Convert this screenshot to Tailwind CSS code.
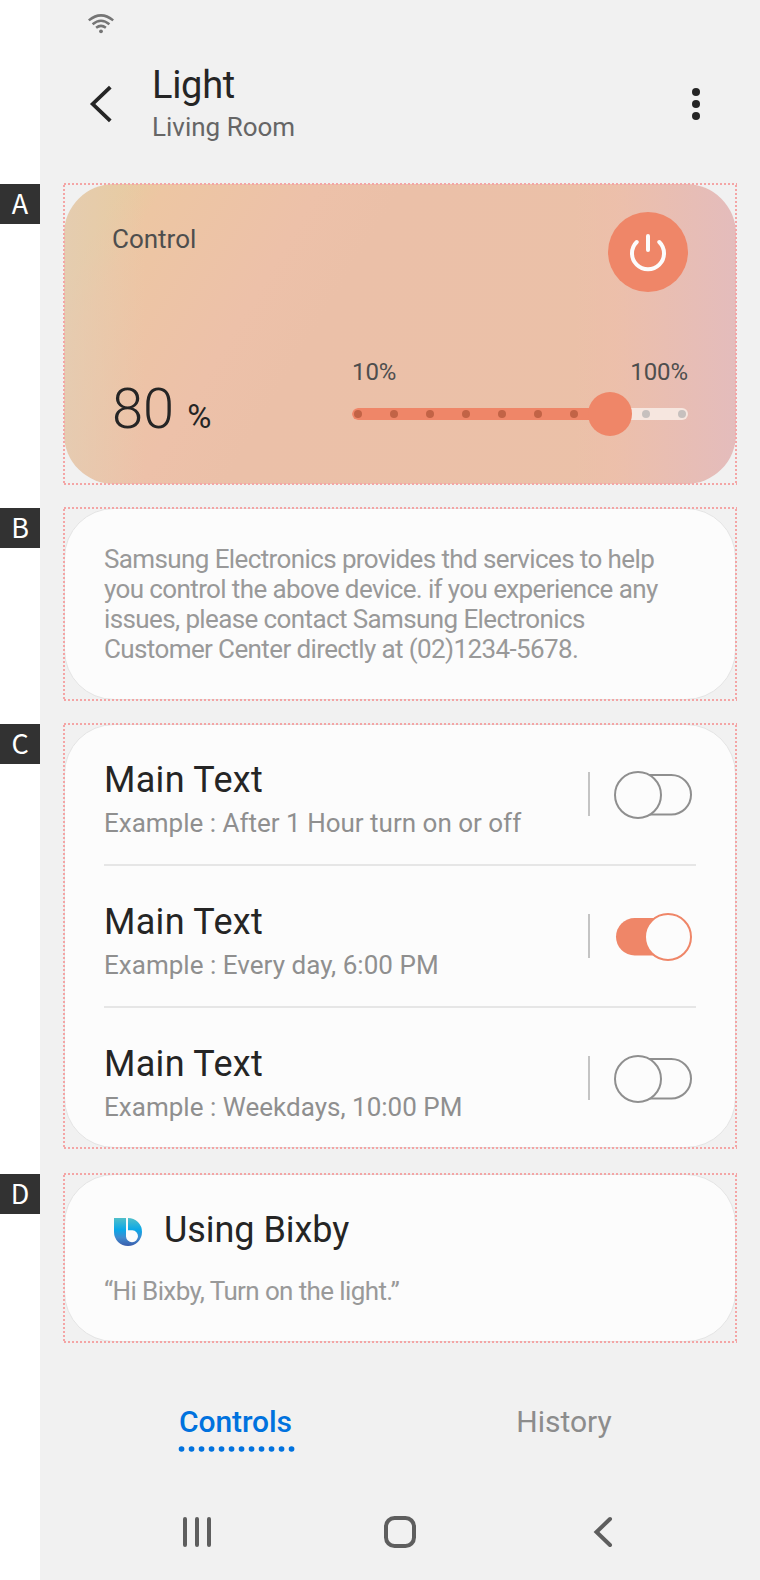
<!DOCTYPE html>
<html lang="en">
<head>
<meta charset="utf-8">
<title>Light</title>
<script src="https://cdn.jsdelivr.net/npm/@tailwindcss/browser@4"></script>
</head>
<body class="bg-white font-['Roboto',sans-serif]">
<div class="flex w-[760px] h-[1580px] overflow-hidden">
  <!-- Section markers -->
  <aside class="w-10 shrink-0 pt-[184px] font-['Noto_Sans_CJK_KR',sans-serif] text-[27px] leading-[38px] text-center text-white">
    <div class="h-10 bg-[#323232]">A</div>
    <div class="h-10 bg-[#323232] mt-[284px]">B</div>
    <div class="h-10 bg-[#323232] mt-[176px]">C</div>
    <div class="h-10 bg-[#323232] mt-[410px]">D</div>
  </aside>

  <main class="w-[720px] h-[1580px] bg-[#f1f1f1] px-6 flex flex-col">
    <header class="h-[184px]">
      <div class="h-[63px] pl-[22px] pt-3">
        <svg class="block" width="30" height="24" viewBox="0 0 30 24" fill="none" stroke="#757575" stroke-width="2.5">
          <path d="M2.8 8.4Q15 -1.6 27.2 8.4M6.6 12.2Q15 5.2 23.4 12.2M10.1 15.8Q15 12 19.9 15.8"/>
          <circle cx="15" cy="19.3" r="1.9" fill="#757575" stroke="none"/>
        </svg>
      </div>
      <div class="flex items-start">
        <svg class="ml-6 mt-[21px] block" width="28" height="40" viewBox="0 0 28 40" fill="none" stroke="#252525" stroke-width="3.8"><path d="M22.3 3.2L4.7 20L22.3 36.8"/></svg>
        <div class="ml-9">
          <h1 class="text-[38px] leading-[44px] tracking-[-0.3px] text-[#252525]">Light</h1>
          <p class="mt-[5px] text-[26px] leading-[30px] text-[#666]">Living Room</p>
        </div>
        <svg class="ml-auto mr-9 mt-[25px] block" width="8" height="32" viewBox="0 0 8 32" fill="#252525"><circle cx="4" cy="4" r="4"/><circle cx="4" cy="16" r="4"/><circle cx="4" cy="28" r="4"/></svg>
      </div>
    </header>

    <!-- Brightness control -->
    <section class="relative h-[300px]">
      <div class="h-[300px] rounded-[50px] px-12 pt-7 bg-[linear-gradient(90deg,rgba(228,205,180,0.8)_0%,rgba(232,200,170,0)_12%),linear-gradient(90deg,transparent_76%,rgba(237,191,171,0.8)_82%,#e4bcbc_100%),linear-gradient(121deg,#e8cba0_7%,#edc6a3_12%,#edc1a9_30%,#ebc0a8_40%,#ebc1a8_100%)]">
        <div class="flex justify-between items-start">
          <div class="mt-3 text-[26px] leading-[30px] text-[#4e4e4e]">Control</div>
          <svg class="block" width="80" height="80" viewBox="0 0 80 80" fill="none" stroke="#fcfcfc" stroke-width="4" stroke-linecap="round">
            <circle cx="40" cy="40" r="40" fill="#ef8668" stroke="none"/>
            <path d="M40 24V38M28.7 30A16 16 0 1 0 51.3 30"/>
          </svg>
        </div>
        <div class="flex justify-between mt-[66px]">
          <div class="flex items-baseline mt-[18px] text-[#252525]">
            <span class="text-[56px] leading-[66px] font-light">80</span>
            <span class="ml-[13px] text-[33px] leading-[40px]">%</span>
          </div>
          <div class="w-[336px]">
            <div class="flex justify-between text-2xl leading-7 tracking-[-0.1px] text-[#4e4e4e]"><span>10%</span><span>100%</span></div>
            <svg class="block mt-[6px]" width="336" height="44" viewBox="0 0 336 44">
              <rect y="16" width="336" height="12" rx="6" fill="#f6e6df"/>
              <path d="M6 16H258V28H6A6 6 0 0 1 6 16Z" fill="#ef8668"/>
              <g fill="#c26346"><circle cx="6" cy="22" r="4"/><circle cx="42" cy="22" r="4"/><circle cx="78" cy="22" r="4"/><circle cx="114" cy="22" r="4"/><circle cx="150" cy="22" r="4"/><circle cx="186" cy="22" r="4"/><circle cx="222" cy="22" r="4"/></g>
              <g fill="#c6c0be"><circle cx="294" cy="22" r="4"/><circle cx="330" cy="22" r="4"/></g>
              <circle cx="258" cy="22" r="22" fill="#ef8668"/>
            </svg>
          </div>
        </div>
      </div>
      <svg class="absolute inset-0 overflow-visible" width="672" height="300" fill="none" stroke="#f4a5a5" stroke-width="2" stroke-dasharray="2 2"><path d="M0 0H673M0 300H673M0 1V301M672 1V301"/></svg>
    </section>

    <!-- Service notice -->
    <section class="relative mt-6 h-[192px]">
      <div class="h-[192px] rounded-[50px] bg-[#fcfcfc] border border-[#e4e4e4] px-[39px] pt-[35px]">
        <p class="text-[26px] leading-[30px] tracking-[-0.61px] text-[#999] whitespace-nowrap">Samsung Electronics provides thd services to help<br>you control the above device. if you experience any<br>issues, please contact Samsung Electronics<br>Customer Center directly at (02)1234-5678.</p>
      </div>
      <svg class="absolute inset-0 overflow-visible" width="672" height="192" fill="none" stroke="#f4a5a5" stroke-width="2" stroke-dasharray="2 2"><path d="M0 0H673M0 192H673M0 1V193M672 1V193"/></svg>
    </section>

    <!-- Schedules -->
    <section class="relative mt-6 h-[424px]">
      <div class="h-[424px] rounded-[50px] bg-[#fcfcfc] border border-[#e4e4e4] px-[39px]">
        <div class="h-[141px] flex border-b-2 border-[#e6e6e6]">
          <div class="pt-[34px]">
            <h2 class="text-[36px] leading-[42px] tracking-[0.3px] text-[#252525]">Main Text</h2>
            <p class="mt-[7px] text-[26px] leading-[30px] text-[#8f8f8f]">Example : After 1 Hour turn on or off</p>
          </div>
          <div class="ml-auto mt-[47px] w-[2px] h-11 bg-[#c4c4c4]"></div>
          <svg class="ml-6 mr-1 mt-[46px] block" width="78" height="48" viewBox="0 0 78 48" stroke="#8f8f8f" stroke-width="2" fill="#fcfcfc"><rect x="5" y="4" width="72" height="39.5" rx="19.75"/><circle cx="24" cy="24" r="23"/></svg>
        </div>
        <div class="h-[142px] flex border-b-2 border-[#e6e6e6]">
          <div class="pt-[35px]">
            <h2 class="text-[36px] leading-[42px] tracking-[0.3px] text-[#252525]">Main Text</h2>
            <p class="mt-[7px] text-[26px] leading-[30px] tracking-[0.03px] text-[#8f8f8f]">Example : Every day, 6:00 PM</p>
          </div>
          <div class="ml-auto mt-12 w-[2px] h-11 bg-[#c4c4c4]"></div>
          <svg class="ml-6 mr-1 mt-[47px] block" width="78" height="48" viewBox="0 0 78 48"><rect x="2" y="5" width="74" height="37.5" rx="18.75" fill="#ef8668"/><circle cx="54" cy="24" r="23" fill="#fcfcfc" stroke="#ef8668" stroke-width="2"/></svg>
        </div>
        <div class="flex">
          <div class="pt-[35px]">
            <h2 class="text-[36px] leading-[42px] tracking-[0.3px] text-[#252525]">Main Text</h2>
            <p class="mt-[7px] text-[26px] leading-[30px] tracking-[0.02px] text-[#8f8f8f]">Example : Weekdays, 10:00 PM</p>
          </div>
          <div class="ml-auto mt-12 w-[2px] h-11 bg-[#c4c4c4]"></div>
          <svg class="ml-6 mr-1 mt-[47px] block" width="78" height="48" viewBox="0 0 78 48" stroke="#8f8f8f" stroke-width="2" fill="#fcfcfc"><rect x="5" y="4" width="72" height="39.5" rx="19.75"/><circle cx="24" cy="24" r="23"/></svg>
        </div>
      </div>
      <svg class="absolute inset-0 overflow-visible" width="672" height="424" fill="none" stroke="#f4a5a5" stroke-width="2" stroke-dasharray="2 2"><path d="M0 0H673M0 424H673M0 1V425M672 1V425"/></svg>
    </section>

    <!-- Voice assistant -->
    <section class="relative mt-[26px] h-[168px]">
      <div class="h-[168px] rounded-[50px] bg-[#fcfcfc] border border-[#e4e4e4] px-[39px] pt-[34px]">
        <div class="flex">
          <svg class="ml-[10px] mt-[9px] block" width="28" height="28" viewBox="0 0 28 28">
            <defs><linearGradient id="bx" x1="0" y1="0" x2="0" y2="1"><stop offset="0" stop-color="#51bfc9"/><stop offset=".42" stop-color="#0aa8e8"/><stop offset=".7" stop-color="#3f8bcf"/><stop offset="1" stop-color="#3a5cab"/></linearGradient></defs>
            <path fill="url(#bx)" fill-rule="evenodd" d="M0 0H12V18.5A6 6 0 1 0 18.4 12.2H14V0A14 14 0 1 1 0 14Z"/>
          </svg>
          <h2 class="ml-[22px] text-[36px] leading-[42px] tracking-[-0.05px] text-[#252525]">Using Bixby</h2>
        </div>
        <p class="mt-[25px] text-[26px] leading-[30px] tracking-[-0.61px] text-[#999]">“Hi Bixby, Turn on the light.”</p>
      </div>
      <svg class="absolute inset-0 overflow-visible" width="672" height="168" fill="none" stroke="#f4a5a5" stroke-width="2" stroke-dasharray="2 2"><path d="M0 0H673M0 168H673M0 1V169M672 1V169"/></svg>
    </section>

    <nav class="mt-[62px] grid grid-cols-2 px-2 h-[112px] text-[30px] leading-9">
      <div class="flex flex-col items-center text-[#0072de] font-medium">
        <span class="tracking-[-0.1px] mr-px">Controls</span>
        <svg class="block mt-[6px] ml-[2px]" width="118" height="6" viewBox="0 0 118 6"><path d="M3.5 3H114.6" stroke="#0072de" stroke-width="5.6" stroke-linecap="round" stroke-dasharray="0.1 9.9"/></svg>
      </div>
      <div class="text-center text-[#8c8c8c]">History</div>
    </nav>

    <footer class="flex items-center h-8 pl-[119px] pr-[122px]">
      <svg width="28" height="32" viewBox="0 0 28 32" stroke="#5e5e5e" stroke-width="4" stroke-linecap="round"><path d="M2 3V29M14 3V29M26 3V29"/></svg>
      <svg class="ml-[173px]" width="32" height="32" viewBox="0 0 32 32" fill="none" stroke="#5e5e5e" stroke-width="4"><rect x="2" y="2" width="28" height="28" rx="8.5"/></svg>
      <svg class="ml-[177px]" width="20" height="32" viewBox="0 0 20 32" fill="none" stroke="#5e5e5e" stroke-width="4" stroke-linecap="round"><path d="M17 3L3.5 16L17 29"/></svg>
    </footer>
  </main>
</div>
</body>
</html>
